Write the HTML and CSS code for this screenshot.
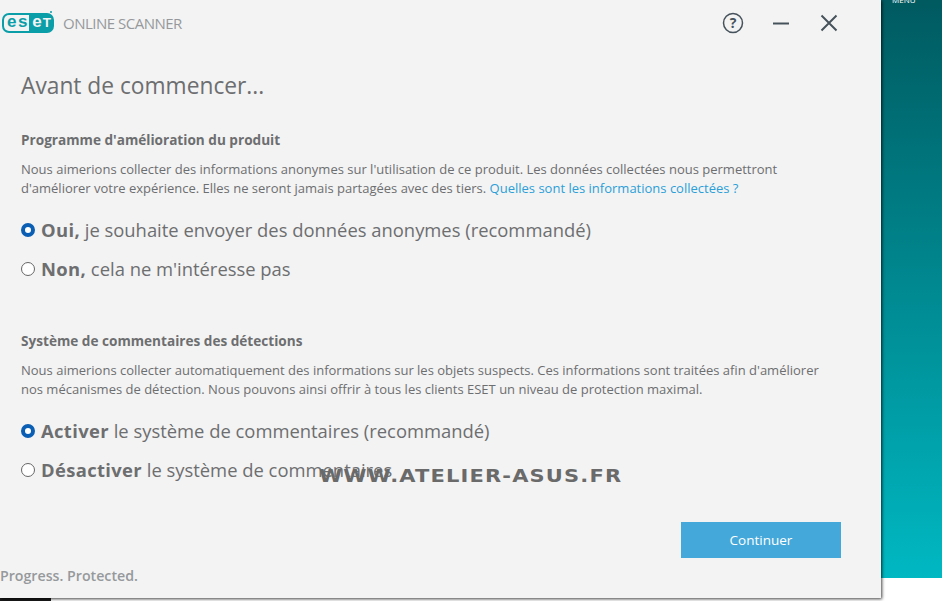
FILE: index.html
```html
<!DOCTYPE html>
<html lang="fr">
<head>
    <meta charset="UTF-8">
    <title>ESET Online Scanner</title>
    <link rel="stylesheet" href="styles.css">
</head>
<body>
    <div class="window">
        <header class="titlebar">
            <div class="brand">
                <span class="logo"><span class="logo-light">es</span><span class="logo-dark">e<small>T</small></span></span>
                <span class="product">ONLINE SCANNER</span>
            </div>
            <div class="controls">
                <svg class="help" width="22" height="22" viewBox="0 0 22 22">
                    <circle cx="11" cy="11" r="9.5" fill="none" stroke="#46525b" stroke-width="1.5"/>
                    <text x="11" y="16" text-anchor="middle" class="help-mark">?</text>
                </svg>
                <svg width="18" height="22" viewBox="0 0 18 22">
                    <path d="M1 11.5h16" stroke="#46525b" stroke-width="2"/>
                </svg>
                <svg width="18" height="22" viewBox="0 0 18 22">
                    <path d="M1.5 3.5l15 15M16.5 3.5l-15 15" stroke="#46525b" stroke-width="2"/>
                </svg>
            </div>
        </header>

        <main class="content">
            <h1>Avant de commencer...</h1>

            <section class="block">
                <h2>Programme d'amélioration du produit</h2>
                <p>Nous aimerions collecter des informations anonymes sur l'utilisation de ce produit. Les données collectées nous permettront<br>d'améliorer votre expérience. Elles ne seront jamais partagées avec des tiers. <a href="#">Quelles sont les informations collectées ?</a></p>
                <div class="choice"><span class="radio checked"></span><span><b>Oui,</b> je souhaite envoyer des données anonymes (recommandé)</span></div>
                <div class="choice"><span class="radio"></span><span><b>Non,</b> cela ne m'intéresse pas</span></div>
            </section>

            <section class="block">
                <h2>Système de commentaires des détections</h2>
                <p>Nous aimerions collecter automatiquement des informations sur les objets suspects. Ces informations sont traitées afin d'améliorer<br>nos mécanismes de détection. Nous pouvons ainsi offrir à tous les clients ESET un niveau de protection maximal.</p>
                <div class="choice"><span class="radio checked"></span><span><b>Activer</b> le système de commentaires (recommandé)</span></div>
                <div class="choice"><span class="radio"></span><span><b>Désactiver</b> le système de commentaires</span></div>
            </section>

            <div class="actions">
                <button>Continuer</button>
            </div>
        </main>

        <footer class="tagline">Progress. Protected.</footer>
        <div class="watermark">WWW.ATELIER-ASUS.FR</div>
    </div>

    <aside class="side">
        <span class="menu">MENU</span>
    </aside>
    <div class="taskbar"></div>
</body>
</html>
```

FILE: styles.css
```css
* {
    margin: 0;
    padding: 0;
    box-sizing: border-box;
}

html, body {
    height: 100%;
    overflow: hidden;
}

body {
    position: relative;
    display: flex;
    align-items: flex-start;
    background: #fff;
    font-family: 'Open Sans', 'Noto Sans', sans-serif;
    color: #6d6e70;
}

/* Dialog window */
.window {
    position: relative;
    z-index: 1;
    display: flex;
    flex-direction: column;
    width: 881px;
    height: 598px;
    background: #f3f3f3;
    box-shadow: 1px 1px 3px rgba(0, 0, 0, 0.75);
}

.titlebar {
    display: flex;
    align-items: center;
    justify-content: space-between;
    height: 46px;
    padding: 0 43px 0 2px;
}

.brand {
    display: flex;
    align-items: center;
    gap: 9px;
}

.logo {
    position: relative;
    display: flex;
    width: 52px;
    height: 20px;
    border: 2px solid #0a9ea8;
    border-radius: 7px;
    background: #0a9ea8;
    font: bold 17px/14px 'Liberation Sans', sans-serif;
}

/* small registered mark on the logo corner */
.logo::after {
    content: "";
    position: absolute;
    top: -4px;
    right: 0;
    width: 2px;
    height: 2px;
    border-radius: 50%;
    background: #0a9ea8;
}

.logo-light {
    width: 27px;
    padding-left: 3px;
    background: #f3f3f3;
    border-radius: 5px 0 0 5px;
    color: #0a9ea8;
    letter-spacing: 1.5px;
}

.logo-dark {
    padding-left: 3px;
    color: #f3f3f3;
    letter-spacing: 1px;
}

.logo-dark small {
    font-size: 13.5px;
}

.product {
    font-size: 15px;
    letter-spacing: -0.5px;
    color: #96999c;
}

.controls {
    display: flex;
    align-items: center;
    gap: 30px;
}

.help {
    margin-right: -2px;
}

.help-mark {
    font: bold 14px 'Open Sans', sans-serif;
    fill: #46525b;
}

/* Main form */
.content {
    display: flex;
    flex-direction: column;
    flex: 1;
    padding: 23px 40px 0 21px;
}

h1 {
    font-size: 22.75px;
    font-weight: 400;
    line-height: 33px;
    margin-bottom: 29px;
}

h2 {
    font-size: 13.6px;
    font-weight: 700;
    line-height: 18px;
    margin-bottom: 11px;
}

.block {
    margin-bottom: 44px;
}

.block p {
    font-size: 13px;
    line-height: 19px;
    margin-bottom: 12px;
}

a {
    color: #2b9fd8;
    text-decoration: none;
}

.choice {
    display: flex;
    align-items: center;
    gap: 6px;
    height: 39px;
    font-size: 18.4px;
}

.choice b {
    font-weight: 700;
    letter-spacing: 0.35px;
}

.radio {
    width: 14px;
    height: 14px;
    border: 1px solid #666;
    border-radius: 50%;
    background: #fff;
}

.radio.checked {
    border: 4px solid #0a5fb4;
}

.actions {
    display: flex;
    justify-content: flex-end;
    margin-top: -11px;
}

button {
    width: 160px;
    height: 36px;
    border: none;
    background: #45a8da;
    color: #fff;
    font: 13.5px 'Open Sans', sans-serif;
}

.tagline {
    height: 31px;
    font-size: 14.2px;
    line-height: 18px;
    font-weight: 600;
    color: #96999c;
}

.watermark {
    position: absolute;
    left: 319px;
    top: 465px;
    font: bold 18px/22px 'DejaVu Sans', sans-serif;
    letter-spacing: 1px;
    color: #6a6a6a;
    transform: scaleX(1.165);
    transform-origin: left center;
}

/* Teal panel behind the dialog */
.side {
    width: 61px;
    height: 578px;
    padding-left: 11px;
    background: linear-gradient(180deg, #005a60, #00b8c2);
    overflow: hidden;
}

.menu {
    display: block;
    margin-top: -6px;
    font-size: 8px;
    line-height: 12px;
    color: #fff;
}

.taskbar {
    position: absolute;
    left: 0;
    top: 598px;
    width: 51px;
    height: 3px;
    background: #1a1a1a;
}
```
